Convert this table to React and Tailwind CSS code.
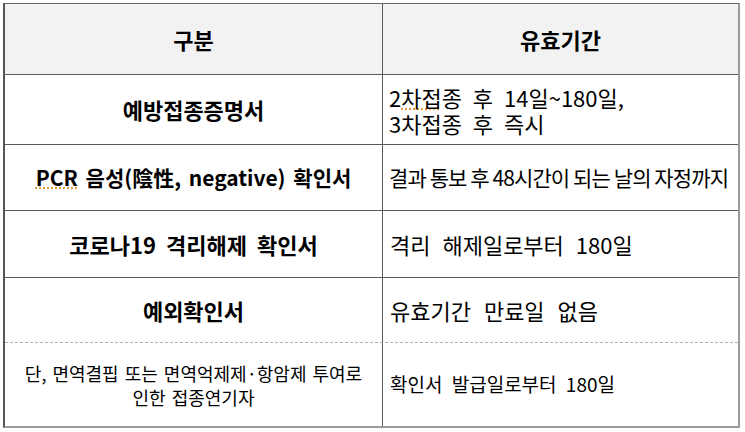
import React from "react";

const F = { fontFamily: '"Noto Sans CJK KR", "Noto Sans", sans-serif' };

function Row({ h, left, right, leftCls = "", rightCls = "", dashed = false, last = false, bg = "" }) {
  return (
    <div
      className={`flex ${h} ${bg} ${last ? "" : dashed ? "border-b border-dashed border-b-[#b0b0b0]" : "border-b border-b-[#5a5a5a]"}`}
    >
      <div className={`w-[378px] shrink-0 border-r border-r-[#5a5a5a] flex flex-col items-center justify-center text-center text-black whitespace-nowrap ${leftCls}`}>
        {left}
      </div>
      <div className={`flex-1 flex flex-col justify-center text-black whitespace-nowrap ${rightCls}`}>{right}</div>
    </div>
  );
}

export default function App() {
  return (
    <div className="w-[745px] h-[432px] bg-white pt-[3px] pl-[3px]" style={F}>
      <div className="w-[737px] border-l-2 border-l-[#555] border-t border-t-[#666] border-r-2 border-r-[#9a9a9a] border-b-2 border-b-[#9a9a9a]">
        <Row
          h="h-[71px]"
          bg="bg-[#f2f2f2]"
          leftCls="text-[22px] font-bold"
          rightCls="items-center text-[22px] font-bold"
          left={<span>구분</span>}
          right={<span>유효기간</span>}
        />
        <Row
          h="h-[70px]"
          leftCls="text-[22px] font-bold"
          rightCls="pl-[6px] text-[22px] [word-spacing:6px]"
          left={<span>예방접종증명서</span>}
          right={
            <>
              <div className="h-[26px] leading-[26px] overflow-visible">
                2<span className="inline-block leading-[26px] h-[26px] underline decoration-dotted decoration-[#e0a040]">차접</span>종 후 14일~180일,
              </div>
              <div className="h-[26px] leading-[26px]">3차접종 후 즉시</div>
            </>
          }
        />
        <Row
          h="h-[66px]"
          leftCls="text-[21px] font-bold [word-spacing:3px]"
          rightCls="pl-[6px] text-[21px] tracking-[-0.9px]"
          left={
            <span>
              <span className="underline decoration-dotted decoration-[#e0a040]">PCR</span> 음성(陰性, negative) 확인서
            </span>
          }
          right={<span>결과 통보 후 48시간이 되는 날의 자정까지</span>}
        />
        <Row
          h="h-[67px]"
          leftCls="text-[22px] font-bold [word-spacing:5px]"
          rightCls="pl-[7px] text-[22px] [word-spacing:7px]"
          left={<span>코로나19 격리해제 확인서</span>}
          right={<span>격리 해제일로부터 180일</span>}
        />
        <Row
          h="h-[65px]"
          dashed
          leftCls="text-[22px] font-bold"
          rightCls="pl-[7px] text-[22px] [word-spacing:8px]"
          left={<span>예외확인서</span>}
          right={<span>유효기간 만료일 없음</span>}
        />
        <Row
          h="h-[83px]"
          last
          leftCls="text-[18px] leading-[24px] [word-spacing:2px]"
          rightCls="pl-[7px] text-[19px] [word-spacing:5px]"
          left={
            <>
              <span>단, 면역결핍 또는 면역억제제·항암제 투여로</span>
              <span>인한 접종연기자</span>
            </>
          }
          right={<span>확인서 발급일로부터 180일</span>}
        />
      </div>
    </div>
  );
}
